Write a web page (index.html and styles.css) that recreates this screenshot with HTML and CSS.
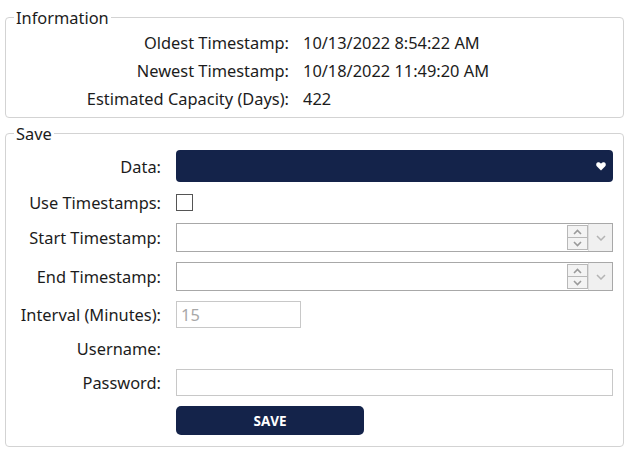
FILE: index.html
```html
<!DOCTYPE html>
<html>
<head>
<meta charset="utf-8">
<link rel="stylesheet" href="styles.css">
</head>
<body>
<div class="page">
  <fieldset class="group info">
    <legend>Information</legend>
    <div class="info-grid">
      <div class="lbl">Oldest Timestamp:</div><div class="val">10/13/2022 8:54:22 AM</div>
      <div class="lbl">Newest Timestamp:</div><div class="val">10/18/2022 11:49:20 AM</div>
      <div class="lbl">Estimated Capacity (Days):</div><div class="val">422</div>
    </div>
  </fieldset>
  <fieldset class="group save">
    <legend>Save</legend>
    <div class="form-grid">
      <div class="lbl">Data:</div>
      <div class="select">
        <svg class="heart" width="10" height="9" viewBox="0 0 10 9"><path d="M5 8.6 L1 4.6 C-0.2 3.4 0 1.3 1.4 0.6 C2.7 -0.1 4 0.5 5 1.7 C6 0.5 7.3 -0.1 8.6 0.6 C10 1.3 10.2 3.4 9 4.6 Z" fill="#fff"/></svg>
      </div>

      <div class="lbl short">Use Timestamps:</div>
      <div class="check-wrap"><span class="check"></span></div>

      <div class="lbl">Start Timestamp:</div>
      <div class="dt">
        <div class="dt-text"></div>
        <div class="spin">
          <span class="spin-btn"><svg width="9" height="6" viewBox="0 0 9 6"><path d="M1 5 L4.5 1.5 L8 5" stroke="#9a9a9a" stroke-width="1.6" fill="none"/></svg></span>
          <span class="spin-btn"><svg width="9" height="6" viewBox="0 0 9 6"><path d="M1 1 L4.5 4.5 L8 1" stroke="#9a9a9a" stroke-width="1.6" fill="none"/></svg></span>
        </div>
        <div class="drop"><svg width="10" height="6" viewBox="0 0 10 6"><path d="M1 1 L5 5 L9 1" stroke="#b4b4b4" stroke-width="1.5" fill="none"/></svg></div>
      </div>

      <div class="lbl">End Timestamp:</div>
      <div class="dt">
        <div class="dt-text"></div>
        <div class="spin">
          <span class="spin-btn"><svg width="9" height="6" viewBox="0 0 9 6"><path d="M1 5 L4.5 1.5 L8 5" stroke="#9a9a9a" stroke-width="1.6" fill="none"/></svg></span>
          <span class="spin-btn"><svg width="9" height="6" viewBox="0 0 9 6"><path d="M1 1 L4.5 4.5 L8 1" stroke="#9a9a9a" stroke-width="1.6" fill="none"/></svg></span>
        </div>
        <div class="drop"><svg width="10" height="6" viewBox="0 0 10 6"><path d="M1 1 L5 5 L9 1" stroke="#b4b4b4" stroke-width="1.5" fill="none"/></svg></div>
      </div>

      <div class="lbl">Interval (Minutes):</div>
      <div><div class="interval">15</div></div>

      <div class="lbl short">Username:</div>
      <div></div>

      <div class="lbl">Password:</div>
      <div class="password"></div>

      <div></div>
      <div><button class="save-btn">SAVE</button></div>
    </div>
  </fieldset>
</div>
</body>
</html>
```

FILE: styles.css
```css
html, body {
  margin: 0;
  padding: 0;
  background: #fff;
}
body {
  font-family: "Noto Sans", "Open Sans", sans-serif;
  font-size: 16.4px;
  color: #1c1c1c;
}
.page {
  padding: 7px 0 0 5px;
  width: 619px;
}
.group {
  margin: 0;
  border: 1px solid #d3d3d3;
  border-radius: 4px;
  min-width: 0;
}
.group legend {
  padding: 0 2px;
  margin-left: 8px;
  line-height: 21px;
  font-size: 16.4px;
}
.info {
  padding: 0 0 5px 0;
}
.save {
  margin-top: 5px;
  padding: 6px 0 11px 0;
}
.info-grid {
  display: grid;
  grid-template-columns: 283px auto;
  column-gap: 14px;
  grid-auto-rows: 28px;
  align-items: center;
}
.lbl {
  text-align: right;
  white-space: nowrap;
}
.form-grid {
  display: grid;
  grid-template-columns: 155px 437px;
  column-gap: 15px;
  row-gap: 10px;
  align-items: center;
}
.form-grid .lbl {
  line-height: 21px;
}
.select {
  height: 32px;
  background: #14234a;
  border-radius: 4px;
  display: flex;
  align-items: center;
  justify-content: flex-end;
  padding-right: 7px;
  box-sizing: border-box;
}
.check-wrap {
  height: 21px;
  display: flex;
  align-items: center;
}
.check {
  width: 15px;
  height: 15px;
  border: 1px solid #555;
  display: block;
}
.dt {
  height: 29px;
  display: flex;
  border: 1px solid #a8a8a8;
  box-sizing: border-box;
}
.dt-text {
  flex: 1;
}
.spin {
  width: 21px;
  display: flex;
  flex-direction: column;
  padding: 1px 0;
  box-sizing: border-box;
}
.spin-btn {
  flex: 1;
  border: 1px solid #b8b8b8;
  background: #f3f3f3;
  display: flex;
  align-items: center;
  justify-content: center;
  margin-top: -1px;
}
.spin-btn:first-child {
  margin-top: 0;
}
.drop {
  width: 23px;
  background: #f0f0f0;
  border-left: 1px solid #dcdcdc;
  display: flex;
  align-items: center;
  justify-content: center;
}
.interval {
  width: 125px;
  height: 27px;
  border: 1px solid #c8c8c8;
  box-sizing: border-box;
  color: #a8a8a8;
  padding-left: 4px;
  line-height: 25px;
}
.password {
  height: 27px;
  border: 1px solid #c8c8c8;
  box-sizing: border-box;
}
.save-btn {
  width: 188px;
  height: 29px;
  border: none;
  border-radius: 5px;
  background: #14234a;
  color: #fff;
  font-family: "Open Sans", "Noto Sans", sans-serif;
  font-weight: 700;
  font-size: 13.5px;
  padding: 0;
  display: block;
}
```
